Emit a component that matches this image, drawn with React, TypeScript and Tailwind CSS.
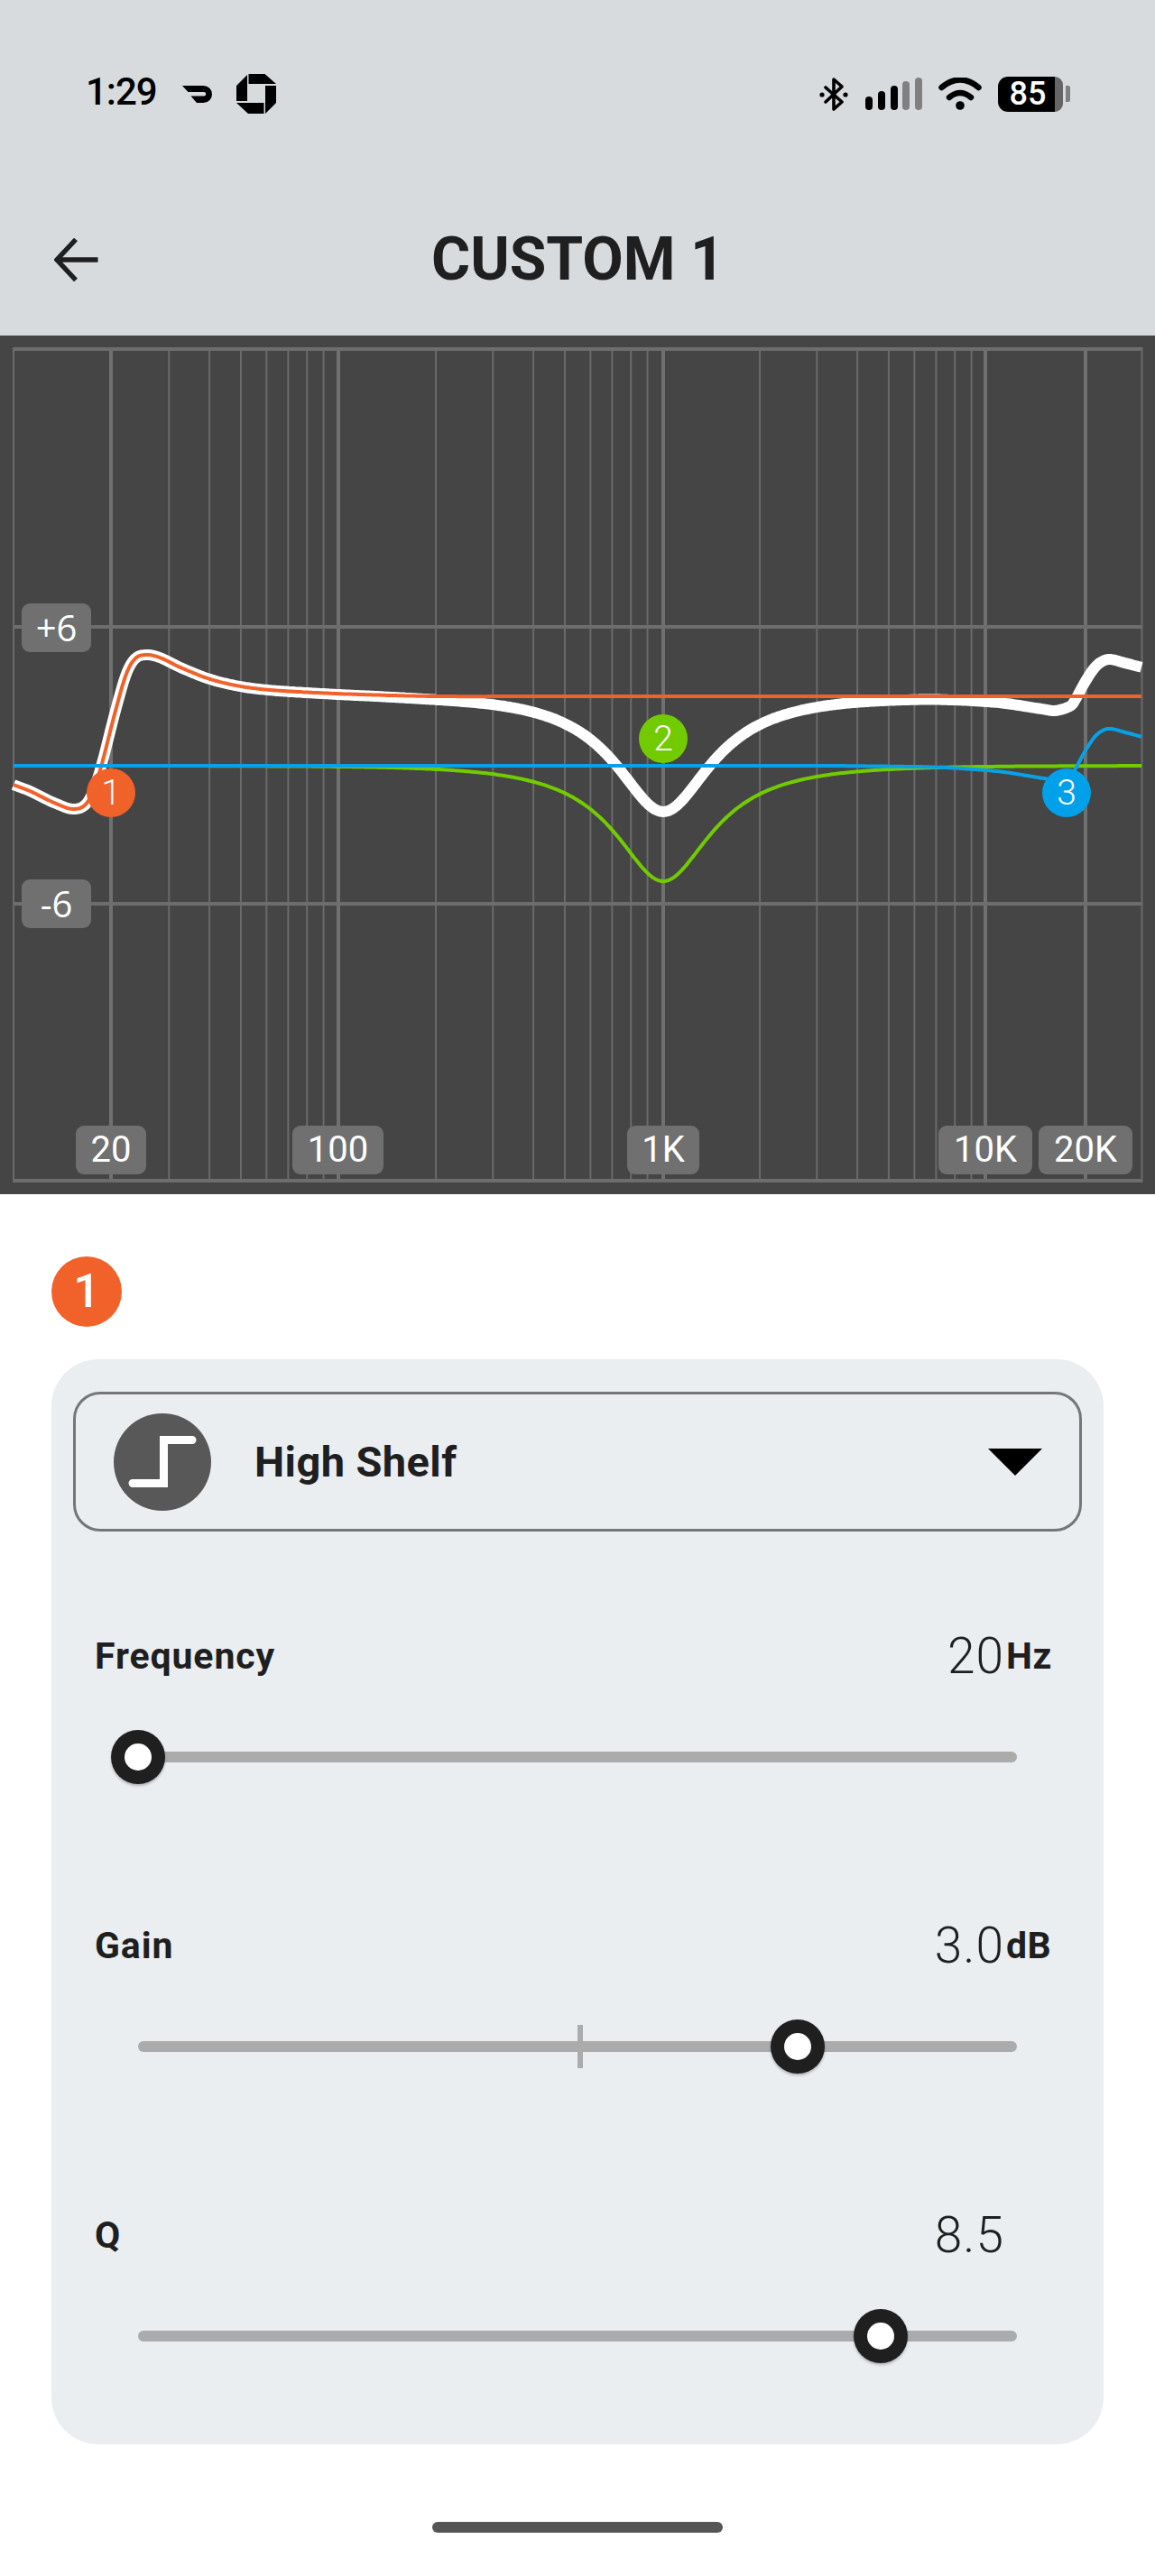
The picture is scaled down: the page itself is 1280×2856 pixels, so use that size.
import React from 'react';

type Pt = [number, number];

/* Hermite interpolation through hand-read points (page coordinates); x always grows */
function interp(pts: Pt[], px: number) {
  const slope = (i: number) => {
    const a = pts[Math.max(i - 1, 0)];
    const b = pts[Math.min(i + 1, pts.length - 1)];
    return (b[1] - a[1]) / (b[0] - a[0]);
  };
  let i = 0;
  while (i < pts.length - 2 && px > pts[i + 1][0]) i++;
  const [x1, y1] = pts[i];
  const [x2, y2] = pts[i + 1];
  const h = x2 - x1;
  const t = (px - x1) / h;
  const t2 = t * t;
  const t3 = t2 * t;
  return (2 * t3 - 3 * t2 + 1) * y1 + (t3 - 2 * t2 + t) * h * slope(i) + (-2 * t3 + 3 * t2) * y2 + (t3 - t2) * h * slope(i + 1);
}

const ZERO_Y = 849;
const PX_PER_DB = 25.6;

const orangePts: Pt[] = [
  [15, 870], [33, 877], [60, 890], [83, 897], [98, 888], [110, 857], [128, 788],
  [140, 747], [150, 730], [162, 726], [177, 729], [200, 740], [233, 753], [267, 761],
  [300, 765], [350, 768], [400, 770], [483, 772], [600, 772], [1266, 772],
];

const bluePts: Pt[] = [
  [15, 849], [900, 849], [1013, 850], [1047, 851], [1080, 853], [1113, 856], [1157, 863], [1170, 864.5],
  [1187, 859], [1192, 852], [1203, 832], [1215, 815], [1228, 808], [1247, 812], [1266, 817],
];

/* Band 2: peaking filter at 1 kHz, -5 dB, Q 1.2 */
function greenY(px: number) {
  const w = Math.pow(10, (px - 735) / 359);
  const A = Math.pow(10, -5 / 40);
  const Q = 1.2;
  const base = (1 - w * w) ** 2;
  const ratio = (base + ((w * A) / Q) ** 2) / (base + (w / (A * Q)) ** 2);
  return ZERO_Y - 10 * Math.log10(ratio) * PX_PER_DB;
}

const orangeY = (px: number) => interp(orangePts, px);
const blueY = (px: number) => interp(bluePts, px);
const whiteY = (px: number) => orangeY(px) + greenY(px) + blueY(px) - 2 * ZERO_Y;

function curve(fn: (px: number) => number) {
  let d = '';
  for (let px = 15; px <= 1266; px += 2) {
    d += `${d ? 'L' : 'M'}${px} ${fn(px).toFixed(1)} `;
  }
  return d;
}

const x = (f: number) => 375 + 359 * Math.log10(f / 100);
const minorFreqs = [30, 40, 50, 60, 70, 80, 90, 200, 300, 400, 500, 600, 700, 800, 900, 2000, 3000, 4000, 5000, 6000, 7000, 8000, 9000];
const majorX = [123, 375, 735, 1092, 1203];

function StatusBar() {
  return (
    <div className="flex items-center justify-between pt-[82px] pl-[95px] pr-[94px] h-[126px]">
      <div className="flex items-center">
        <span className="w-[107px] text-[42px] leading-[44px] tracking-[-1px] font-medium text-black -mt-[4px]">1:29</span>
        <svg viewBox="0 0 33 19" className="w-[33px] h-[19px]">
          <path d="M0 0H23.5a9.5 9.5 0 0 1 0 19H16L9.5 11.5H24a2.2 2.2 0 0 0 0-4.5H6.5Z" fill="#000" />
        </svg>
        <svg viewBox="0 0 44 44" className="w-[44px] h-[44px] ml-[27px]">
          <path d="M13.5 0H31.5L44 11H13.5Z M32 13H44V32L32 44Z M0 32H30.5V44H13Z M0 13L12 1V30H0Z" fill="#000" />
        </svg>
      </div>
      <div className="flex items-center">
        <svg viewBox="908 85 32 37" className="w-[32px] h-[37px]">
          <path d="M915 96L933 112L924 120V87L933 95L915 112" fill="none" stroke="#000" strokeWidth="3.6" strokeLinejoin="round" strokeLinecap="round" />
          <circle cx="911" cy="104" r="2.6" />
          <circle cx="937" cy="104" r="2.6" />
        </svg>
        <svg viewBox="959 85 63 36" className="w-[63px] h-[36px] ml-[19px]">
          <rect x="959" y="106" width="8" height="15" rx="4" fill="#000" />
          <rect x="973" y="100" width="8" height="21" rx="4" fill="#000" />
          <rect x="987" y="94" width="8" height="27" rx="4" fill="#000" />
          <rect x="1000" y="89" width="8" height="32" rx="4" fill="#808080" />
          <rect x="1014" y="85" width="8" height="36" rx="4" fill="#808080" />
        </svg>
        <svg viewBox="1040 85 48 36" className="w-[48px] h-[36px] ml-[18px]">
          <path d="M1043.5 96Q1064 79 1084.5 96" fill="none" stroke="#000" strokeWidth="6.5" strokeLinecap="round" />
          <path d="M1052 107Q1064 97 1076 107" fill="none" stroke="#000" strokeWidth="6.5" strokeLinecap="round" />
          <circle cx="1064" cy="116" r="4.8" fill="#000" />
        </svg>
        <div className="flex items-center ml-[18px]">
          <div className="relative w-[72px] h-[39px] rounded-l-[11px] rounded-r-[9px] bg-[#666666] overflow-hidden">
            <div className="w-[63px] h-full bg-black rounded-l-[11px] flex items-center justify-center text-white text-[36px] leading-none font-medium pl-[3px]">
              85
            </div>
          </div>
          <div className="w-[5px] h-[18px] ml-[3px] rounded-r-[2px] bg-[#808080]" />
        </div>
      </div>
    </div>
  );
}

function Header() {
  return (
    <div className="h-[372px] bg-[#d7dbde]">
      <StatusBar />
      <div className="flex items-center h-[76px] mt-[124px] pl-[60px]">
        <svg viewBox="60 264 49 48" className="w-[49px] h-[48px]">
          <path d="M108.5 288H63M84 265.5L63 288L84 310.5" fill="none" stroke="#1f1f1f" strokeWidth="5.4" />
        </svg>
        <h1 className="ml-[369px] text-[66px] leading-[76px] font-bold text-[#1f1f1f] whitespace-nowrap">CUSTOM 1</h1>
      </div>
    </div>
  );
}

function AxisLabel({ text, className }: { text: string; className: string }) {
  return (
    <div className={`absolute flex items-center justify-center h-[54px] rounded-[9px] bg-[#707070] text-white text-[40px] leading-none ${className}`}>
      {text}
    </div>
  );
}

function Marker({ n, className }: { n: number; className: string }) {
  return (
    <div className={`absolute flex items-center justify-center w-[54px] h-[54px] rounded-full text-white text-[39px] leading-none font-light ${className}`}>
      {n}
    </div>
  );
}

function Chart() {
  return (
    <div className="relative h-[952px] bg-[#454545]">
      <svg viewBox="0 372 1280 952" className="absolute inset-0 w-full h-full">
        {minorFreqs.map((f) => (
          <line key={f} x1={x(f)} x2={x(f)} y1="387" y2="1309" stroke="#6a6a6a" strokeWidth="2" />
        ))}
        <line x1="15" x2="15" y1="385" y2="1311" stroke="#6a6a6a" strokeWidth="2" />
        <line x1="1265.5" x2="1265.5" y1="385" y2="1311" stroke="#6a6a6a" strokeWidth="2" />
        {majorX.map((mx) => (
          <line key={mx} x1={mx} x2={mx} y1="387" y2="1309" stroke="#707070" strokeWidth="4" />
        ))}
        {[387, 695, 1002, 1309].map((hy) => (
          <line key={hy} x1="15" x2="1266" y1={hy} y2={hy} stroke="#6d6d6d" strokeWidth="4" />
        ))}
        <path d={curve(whiteY)} fill="none" stroke="#fff" strokeWidth="12" />
        <path d={curve(orangeY)} fill="none" stroke="#f1622a" strokeWidth="4" />
        <path d={curve(greenY)} fill="none" stroke="#72cb00" strokeWidth="4" />
        <path d={curve(blueY)} fill="none" stroke="#09a1e6" strokeWidth="4" />
      </svg>

      <AxisLabel text="+6" className="left-[24px] top-[297px] w-[77px] font-['Open_Sans',sans-serif]" />
      <AxisLabel text="-6" className="left-[24px] top-[603px] w-[77px] font-['Open_Sans',sans-serif]" />
      <AxisLabel text="20" className="left-[84px] top-[876px] w-[78px]" />
      <AxisLabel text="100" className="left-[324px] top-[876px] w-[101px]" />
      <AxisLabel text="1K" className="left-[695px] top-[876px] w-[80px]" />
      <AxisLabel text="10K" className="left-[1040px] top-[876px] w-[104px]" />
      <AxisLabel text="20K" className="left-[1151px] top-[876px] w-[104px]" />

      <Marker n={1} className="left-[96px] top-[480px] bg-[#f1622a]" />
      <Marker n={2} className="left-[708px] top-[420px] bg-[#72cb00]" />
      <Marker n={3} className="left-[1155px] top-[480px] bg-[#00a1e8]" />
    </div>
  );
}

function SliderRow({ label, value, unit, pct, tick }: { label: string; value: string; unit?: string; pct: number; tick?: boolean }) {
  return (
    <div className="h-[321px]">
      <div className="flex items-center justify-between h-[60px] pl-[48px] pr-[60px] text-[#1f1f1f]">
        <span className="text-[41px] leading-none font-bold tracking-[0.9px]">{label}</span>
        <span className="flex items-center">
          <span className="text-[55px] leading-none font-light tracking-[1px]">{value}</span>
          <span className="w-[50px] pl-[2px] text-[41px] leading-none font-bold tracking-[0.5px]">{unit}</span>
        </span>
      </div>
      <div className="relative h-[12px] mt-[76px] ml-[96px] mr-[96px] rounded-full bg-[#ababab]">
        {tick && <div className="absolute left-[487px] -top-[18px] w-[6px] h-[48px] bg-[#ababab]" />}
        <div
          className="absolute -top-[24px] -ml-[30px] flex items-center justify-center w-[60px] h-[60px] rounded-full bg-[#1f1f1f] shadow-[0_2px_3px_rgba(0,0,0,0.25)]"
          style={{ left: `${pct}%` }}
        >
          <div className="w-[30px] h-[30px] rounded-full bg-white" />
        </div>
      </div>
    </div>
  );
}

function BandPanel() {
  return (
    <div className="px-[57px]">
      <div className="flex items-center justify-center w-[78px] h-[78px] mt-[69px] rounded-full bg-[#f1622a] text-white text-[52px] leading-none font-medium">
        1
      </div>
      <div className="h-[1203px] mt-[36px] pt-[36px] rounded-[52px] bg-[#eaeef1]">
        <div className="flex items-center h-[155px] mx-[24px] pl-[42px] pr-[41px] border-[3px] border-[#767676] rounded-[30px]">
          <div className="flex items-center justify-center w-[108px] h-[108px] rounded-full bg-[#585858]">
            <svg viewBox="126 1567 108 108" className="w-[108px] h-[108px]">
              <path d="M147 1644.5H181.5V1596.5H213" fill="none" stroke="#fff" strokeWidth="9" strokeLinecap="round" />
            </svg>
          </div>
          <span className="ml-[48px] text-[47px] leading-none font-bold tracking-[0.4px] text-[#1f1f1f]">High Shelf</span>
          <svg viewBox="0 0 60 30" className="w-[60px] h-[30px] ml-auto">
            <path d="M0 0H60L30 30Z" fill="#000" />
          </svg>
        </div>
        <div className="mt-[108px]">
          <SliderRow label="Frequency" value="20" unit="Hz" pct={0} />
          <SliderRow label="Gain" value="3.0" unit="dB" pct={75} tick />
          <SliderRow label="Q" value="8.5" pct={84.5} />
        </div>
      </div>
    </div>
  );
}

export default function App() {
  return (
    <div className="w-[1280px] h-[2856px] overflow-hidden bg-white font-['Roboto',sans-serif]">
      <Header />
      <Chart />
      <BandPanel />
      <div className="w-[322px] h-[12px] mt-[86px] mx-auto rounded-full bg-[#555555]" />
    </div>
  );
}
